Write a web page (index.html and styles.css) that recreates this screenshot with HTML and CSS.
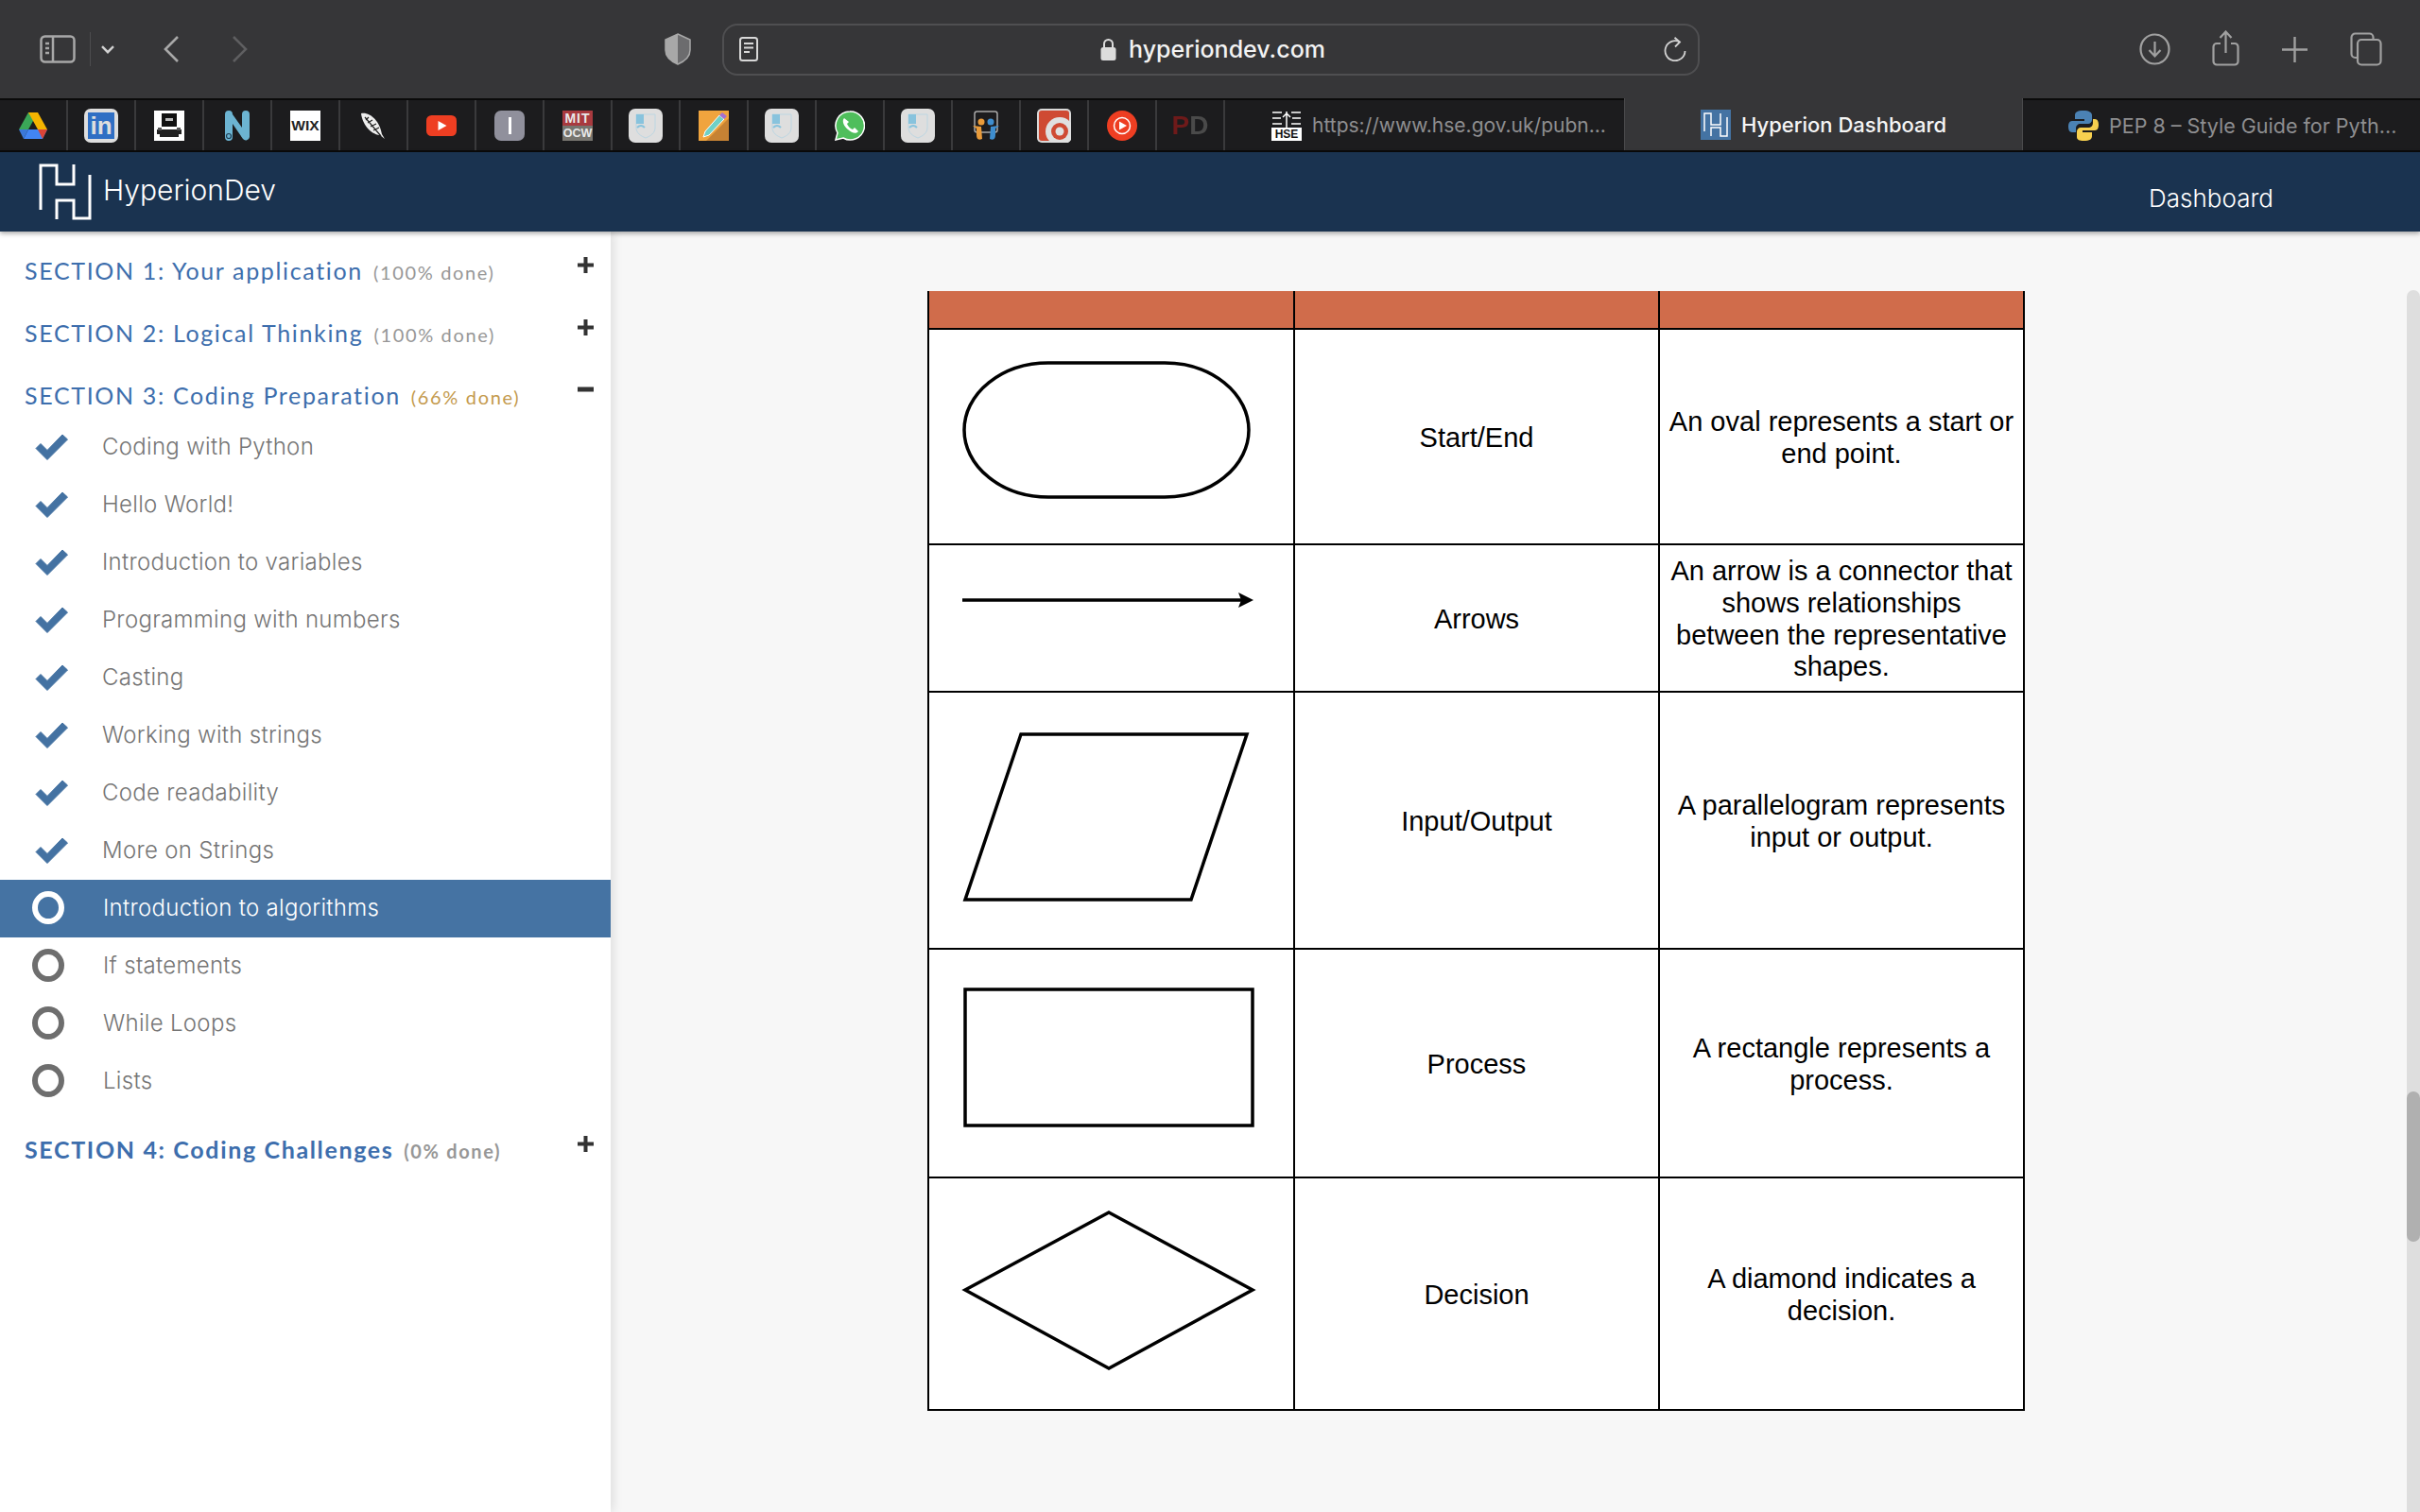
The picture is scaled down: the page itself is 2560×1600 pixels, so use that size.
FILE: index.html
```html
<!DOCTYPE html>
<html lang="en">
<head>
    <meta charset="UTF-8">
    <title>Hyperion Dashboard</title>
    <link rel="stylesheet" href="styles.css">
</head>
<body>
    <div class="toolbar">
        <svg class="tool tool-sidebar" viewBox="0 0 38 30" width="38" height="30" fill="none" stroke="#a8a8a8" stroke-width="2.5"><rect x="1.5" y="1.5" width="35" height="27" rx="4"/><path d="M14 2v26M6 9h4M6 14h4M6 19h4"/></svg>
        <span class="tool-divider"></span>
        <svg class="tool tool-menu" viewBox="0 0 14 9" width="14" height="9" fill="none" stroke="#d2d2d2" stroke-width="2.4"><path d="M1 1.2l6 6 6-6"/></svg>
        <svg class="tool tool-back" viewBox="0 0 16 28" width="16" height="28" fill="none" stroke="#a8a8a8" stroke-width="2.6"><path d="M15 1L2 14l13 13"/></svg>
        <svg class="tool tool-forward" viewBox="0 0 17 28" width="17" height="28" fill="none" stroke="#5f5f61" stroke-width="2.6"><path d="M2 1l13 13L2 27"/></svg>
        <svg class="tool tool-shield" viewBox="0 0 28 34" width="28" height="34"><path d="M14 1l13 6v11c0 8-6 12-13 15C7 30 1 26 1 18V7z" fill="#6c6c6e" stroke="#a8a8a8" stroke-width="1.5"/><path d="M14 1L1 7v11c0 8 6 12 13 15z" fill="#a8a8a8"/></svg>
        <div class="url-bar">
            <svg class="url-reader" viewBox="0 0 20 26" width="20" height="26" fill="none" stroke="#d8d8d8" stroke-width="2"><rect x="1" y="1" width="18" height="24" rx="2.5"/><path d="M5 7h10M5 11.500h10M5 16h6"/></svg>
            <div class="url-center">
                <svg viewBox="0 0 17 24" width="17" height="24"><path d="M4 11V6.500a4.500 4.500 0 0 1 9 0V11" fill="none" stroke="#dcdcdc" stroke-width="2"/><rect x="0.500" y="10" width="16" height="14" rx="2.500" fill="#dcdcdc"/></svg>
                <span class="url-text">hyperiondev.com</span>
            </div>
            <svg class="url-reload" viewBox="0 0 24 26" width="24" height="26" fill="none" stroke="#d2d2d2" stroke-width="1.800"><path d="M17 5.500A10.500 10.500 0 1 0 22.500 15"/><path d="M11.500 0.800l5.500 4.700-5 5"/></svg>
        </div>
        <svg class="tool tool-download" viewBox="0 0 33 34" width="33" height="34" fill="none" stroke="#a0a0a0" stroke-width="2.200"><ellipse cx="16.500" cy="17" rx="15" ry="15.500"/><path d="M16.500 9v15M10.500 18l6 6.500 6-6.500"/></svg>
        <svg class="tool tool-share" viewBox="0 0 29 38" width="29" height="38" fill="none" stroke="#a0a0a0" stroke-width="2.200"><path d="M9 14H5a3.500 3.500 0 0 0-3.500 3.500V33A3.500 3.500 0 0 0 5 36.500h19a3.500 3.500 0 0 0 3.500-3.500V17.500A3.500 3.500 0 0 0 24 14h-4M14.500 24V2M8.500 8l6-6.500 6 6.500"/></svg>
        <svg class="tool tool-plus" viewBox="0 0 27 27" width="27" height="27" fill="none" stroke="#a0a0a0" stroke-width="2.400"><path d="M13.500 0v27M0 13.500h27"/></svg>
        <svg class="tool tool-tabs" viewBox="0 0 34 36" width="34" height="36" fill="none" stroke="#a0a0a0" stroke-width="2.200"><path d="M7 27H5.500A4 4 0 0 1 1.500 23V5.500a4 4 0 0 1 4-4h15a4 4 0 0 1 4 4V8"/><rect x="8" y="8" width="24.500" height="26.500" rx="4"/></svg>
    </div>

    <div class="tabbar">
        <div class="pins">
            <div class="pin"><svg viewBox="0 0 30 28" width="30" height="28"><path d="M10 0h10l-5 9-5 9H0z" fill="#3aa757" transform="translate(0 0)"/><path d="M10 0h10l10 18H20z" fill="#f4b400"/><path d="M5 28h20l5-10H10z" fill="#4285f4"/><path d="M0 18l5 10 5-10z" fill="#3b78d8"/><path d="M20 18h10l-5 10z" fill="#db4437"/></svg></div>
            <div class="pin"><span class="pin-tile pin-tile-light"><span class="linkedin">in</span></span></div>
            <div class="pin"><svg viewBox="0 0 32 32" width="32" height="32"><rect width="32" height="32" fill="#fff"/><path d="M8 3h16v14H8z" fill="#111"/><path d="M12 8h8v3h-8z" fill="#bbb"/><path d="M3 20h26v5H3zM6 25h20v3H6z" fill="#222"/><path d="M4 18h4v3H4zM24 18h4v3h-4z" fill="#555"/></svg></div>
            <div class="pin"><svg viewBox="0 0 26 32" width="26" height="32"><path d="M0 4a4 4 0 0 1 8 0l10 14V4a4 4 0 0 1 8 0v24a4 4 0 0 1-7 2L8 14v14a4 4 0 0 1-8 0z" fill="#6cb4d2"/><circle cx="4" cy="27" r="2.500" fill="none" stroke="#1d3f55" stroke-width="1.200"/></svg></div>
            <div class="pin"><span class="pin-tile pin-wix">WIX</span></div>
            <div class="pin"><svg viewBox="0 0 28 30" width="28" height="30"><path d="M1 2c9-2 20 8 22 22l3 5-5-4C10 24 2 12 1 2z" fill="#eee"/><path d="M5 6l17 20M9 6l-3 3M13 9l-5 3M17 13l-6 3M20 17l-6 3" stroke="#222" stroke-width="1.200" fill="none"/></svg></div>
            <div class="pin"><svg viewBox="0 0 32 22" width="32" height="22"><rect width="32" height="22" rx="5.500" fill="#ee3e22"/><path d="M12.500 6l9 5-9 5z" fill="#fff"/></svg></div>
            <div class="pin"><span class="pin-tile pin-grey"><span class="pin-bar"></span></span></div>
            <div class="pin"><span class="pin-tile pin-mit"><span class="mit-top">MIT</span><span class="mit-bottom">OCW</span></span></div>
            <div class="pin"><span class="pin-tile pin-tile-light"><svg viewBox="0 0 24 28" width="24" height="28" fill="none"><path d="M2 2h20v14c0 6-5 9-10 11C7 25 2 22 2 16z" stroke="#bcd6e2" stroke-width="1"/><path d="M2 2h8v10H2z" fill="#88c3dd"/><path d="M3 16q4-4 8 0" stroke="#88c3dd" stroke-width="2"/></svg></span></div>
            <div class="pin"><svg viewBox="0 0 32 32" width="32" height="32"><rect width="32" height="32" fill="#f0a43e"/><path d="M8 32L32 8v24z" fill="#c68234"/><path d="M7 22L22 5l5 4-16 17-6 2z" fill="#6fd0c6" stroke="#fff" stroke-width="1"/><path d="M22 5l3-3 5 4-3 3z" fill="#a56fd0"/></svg></div>
            <div class="pin"><span class="pin-tile pin-tile-light"><svg viewBox="0 0 24 28" width="24" height="28" fill="none"><path d="M2 2h20v14c0 6-5 9-10 11C7 25 2 22 2 16z" stroke="#bcd6e2" stroke-width="1"/><path d="M2 2h8v10H2z" fill="#88c3dd"/><path d="M3 16q4-4 8 0" stroke="#88c3dd" stroke-width="2"/></svg></span></div>
            <div class="pin"><svg viewBox="0 0 32 32" width="32" height="32"><path d="M16 1a15 15 0 0 0-13 22.500L1 31l8-2A15 15 0 1 0 16 1z" fill="#4fbe5c" stroke="#fff" stroke-width="1.500"/><path d="M10 8c-3 3 0 9 4 12 4 4 9 5 11 2l-4-4-2 2c-3-1-5-4-6-6l2-2z" fill="#fff"/></svg></div>
            <div class="pin"><span class="pin-tile pin-tile-light"><svg viewBox="0 0 24 28" width="24" height="28" fill="none"><path d="M2 2h20v14c0 6-5 9-10 11C7 25 2 22 2 16z" stroke="#bcd6e2" stroke-width="1"/><path d="M2 2h8v10H2z" fill="#88c3dd"/><path d="M3 16q4-4 8 0" stroke="#88c3dd" stroke-width="2"/></svg></span></div>
            <div class="pin"><svg viewBox="0 0 30 32" width="30" height="32"><rect x="3" y="1" width="24" height="22" rx="2.500" fill="#1c1c1e" stroke="#a8a8a8" stroke-width="1.500"/><circle cx="10" cy="12" r="3.500" fill="#e99b3a"/><circle cx="20" cy="12" r="3.500" fill="#3e8ed0"/><path d="M1 16l9 1 1 13c-5 2-6-1-6-5V19z" fill="#e99b3a"/><path d="M29 16l-9 1-1 13c5 2 6-1 6-5V19z" fill="#3e8ed0"/></svg></div>
            <div class="pin"><svg viewBox="0 0 36 36" width="36" height="36"><rect width="36" height="36" rx="5" fill="#d9d9d9"/><rect x="2" y="2" width="32" height="32" rx="3" fill="#cf4a33"/><circle cx="24" cy="24" r="15" fill="#e0e0e0"/><circle cx="24" cy="24" r="9" fill="#cf4a33"/><circle cx="24" cy="24" r="4.500" fill="#e0e0e0"/></svg></div>
            <div class="pin"><svg viewBox="0 0 32 32" width="32" height="32"><circle cx="16" cy="16" r="16" fill="#ee3e22"/><circle cx="16" cy="16" r="8.500" fill="none" stroke="#fff" stroke-width="1.500"/><path d="M13 11.500l8 4.500-8 4.500z" fill="#fff"/></svg></div>
            <div class="pin"><span class="pin-pd"><span class="pd-red">P</span><span class="pd-grey">D</span></span></div>
        </div>
        <div class="tab tab-hse">
            <span class="hse-icon"><svg viewBox="0 0 32 18" width="32" height="18" fill="none" stroke="#fff" stroke-width="1.500"><path d="M1 2h10M1 8h9M1 14h10M21 2h10M22 8h9M21 14h10M16 1v17M12 7l4-4 4 4"/></svg><span class="hse-word">HSE</span></span>
            <span class="tab-label">https://www.hse.gov.uk/pubn...</span>
        </div>
        <div class="tab tab-active">
            <svg viewBox="0 0 32 32" width="32" height="32"><rect width="32" height="32" fill="#4473a3"/><path d="M4 23V4h7v12h10V4M11 28V19h10v9h7V8" fill="none" stroke="#fff" stroke-width="1.500"/></svg>
            <span class="tab-label">Hyperion Dashboard</span>
        </div>
        <div class="tab tab-pep">
            <svg viewBox="0 0 32 34" width="32" height="34"><path d="M16 1c-7 0-9 2-9 5v4h10v2H4c-3 0-4 3-4 6s1 6 4 6h4v-4c0-3 2-5 5-5h8c2 0 4-2 4-4V6c0-3-3-5-9-5z" fill="#4b82b4"/><path d="M16 33c7 0 9-2 9-5v-4H15v-2h13c3 0 4-3 4-6s-1-6-4-6h-2v4c0 3-2 5-5 5h-8c-2 0-4 2-4 4v6c0 3 3 4 7 4z" fill="#f7d04f"/></svg>
            <span class="tab-label">PEP 8 – Style Guide for Pyth...</span>
        </div>
    </div>

    <header class="site-header">
        <div class="brand">
            <svg viewBox="0 0 58 62" width="58" height="62" fill="none" stroke="#fff" stroke-width="3"><path d="M3 50V3h17v20h18V2M20 60V40h18v19h17V13"/></svg>
            <span class="brand-name">HyperionDev</span>
        </div>
        <a class="nav-link">Dashboard</a>
    </header>

    <div class="page">
        <aside class="sidebar">
            <div class="section-head">
                <div class="section-title">SECTION 1: Your application <small class="done">(100% done)</small></div>
                <svg class="toggle" viewBox="0 0 17 17" width="17" height="17"><path d="M6.500 0h4v6.500H17v4h-6.500V17h-4v-6.500H0v-4h6.500z" fill="#333"/></svg>
            </div>
            <div class="section-head">
                <div class="section-title">SECTION 2: Logical Thinking <small class="done">(100% done)</small></div>
                <svg class="toggle" viewBox="0 0 17 17" width="17" height="17"><path d="M6.500 0h4v6.500H17v4h-6.500V17h-4v-6.500H0v-4h6.500z" fill="#333"/></svg>
            </div>
            <div class="section-head">
                <div class="section-title">SECTION 3: Coding Preparation <small class="done done-partial">(66% done)</small></div>
                <svg class="toggle" viewBox="0 0 17 17" width="17" height="17"><path d="M0 5.500h17v5H0z" fill="#333"/></svg>
            </div>
            <ul class="lessons">
                <li class="lesson"><svg class="check" viewBox="0 0 35 28" width="35" height="28"><path d="M13 27.500L1 15.500l5-5 7 7L29 1l5.500 5z" fill="#4472a2" stroke="#4472a2" stroke-linejoin="round"/></svg>Coding with Python</li>
                <li class="lesson"><svg class="check" viewBox="0 0 35 28" width="35" height="28"><path d="M13 27.500L1 15.500l5-5 7 7L29 1l5.500 5z" fill="#4472a2" stroke="#4472a2" stroke-linejoin="round"/></svg>Hello World!</li>
                <li class="lesson"><svg class="check" viewBox="0 0 35 28" width="35" height="28"><path d="M13 27.500L1 15.500l5-5 7 7L29 1l5.500 5z" fill="#4472a2" stroke="#4472a2" stroke-linejoin="round"/></svg>Introduction to variables</li>
                <li class="lesson"><svg class="check" viewBox="0 0 35 28" width="35" height="28"><path d="M13 27.500L1 15.500l5-5 7 7L29 1l5.500 5z" fill="#4472a2" stroke="#4472a2" stroke-linejoin="round"/></svg>Programming with numbers</li>
                <li class="lesson"><svg class="check" viewBox="0 0 35 28" width="35" height="28"><path d="M13 27.500L1 15.500l5-5 7 7L29 1l5.500 5z" fill="#4472a2" stroke="#4472a2" stroke-linejoin="round"/></svg>Casting</li>
                <li class="lesson"><svg class="check" viewBox="0 0 35 28" width="35" height="28"><path d="M13 27.500L1 15.500l5-5 7 7L29 1l5.500 5z" fill="#4472a2" stroke="#4472a2" stroke-linejoin="round"/></svg>Working with strings</li>
                <li class="lesson"><svg class="check" viewBox="0 0 35 28" width="35" height="28"><path d="M13 27.500L1 15.500l5-5 7 7L29 1l5.500 5z" fill="#4472a2" stroke="#4472a2" stroke-linejoin="round"/></svg>Code readability</li>
                <li class="lesson"><svg class="check" viewBox="0 0 35 28" width="35" height="28"><path d="M13 27.500L1 15.500l5-5 7 7L29 1l5.500 5z" fill="#4472a2" stroke="#4472a2" stroke-linejoin="round"/></svg>More on Strings</li>
                <li class="lesson lesson-active"><span class="ring"></span>Introduction to algorithms</li>
                <li class="lesson"><span class="ring"></span>If statements</li>
                <li class="lesson"><span class="ring"></span>While Loops</li>
                <li class="lesson"><span class="ring"></span>Lists</li>
            </ul>
            <div class="section-head section-head-last">
                <div class="section-title section-title-bold">SECTION 4: Coding Challenges <small class="done">(0% done)</small></div>
                <svg class="toggle" viewBox="0 0 17 17" width="17" height="17"><path d="M6.500 0h4v6.500H17v4h-6.500V17h-4v-6.500H0v-4h6.500z" fill="#333"/></svg>
            </div>
        </aside>

        <main class="content">
            <table class="flow-table">
                <colgroup><col class="col-a"><col class="col-b"><col class="col-c"></colgroup>
                <tr class="row-head"><th></th><th></th><th></th></tr>
                <tr class="row-oval">
                    <td class="shape"><svg viewBox="0 0 386 226" width="386" height="226" fill="none" stroke="#000" stroke-width="3.500"><rect x="37" y="35" width="301" height="142" rx="89" ry="71"/></svg></td>
                    <td>Start/End</td>
                    <td>An oval represents a start or end point.</td>
                </tr>
                <tr class="row-arrow">
                    <td class="shape"><svg viewBox="0 0 386 154" width="386" height="154" fill="none" stroke="#000" stroke-width="3.500"><path d="M35 58h280"/><path d="M343 58l-16 8 3-8-3-8z" fill="#000" stroke="none"/><path d="M315 58h16"/></svg></td>
                    <td>Arrows</td>
                    <td>An arrow is a connector that shows relationships between the representative shapes.</td>
                </tr>
                <tr class="row-input">
                    <td class="shape"><svg viewBox="0 0 386 270" width="386" height="270" fill="none" stroke="#000" stroke-width="3.500"><path d="M97 44h239l-59 175H38z"/></svg></td>
                    <td>Input/Output</td>
                    <td>A parallelogram represents input or output.</td>
                </tr>
                <tr class="row-process">
                    <td class="shape"><svg viewBox="0 0 386 240" width="386" height="240" fill="none" stroke="#000" stroke-width="3.500"><rect x="38" y="42" width="304" height="144"/></svg></td>
                    <td>Process</td>
                    <td>A rectangle represents a process.</td>
                </tr>
                <tr class="row-decision">
                    <td class="shape"><svg viewBox="0 0 386 244" width="386" height="244" fill="none" stroke="#000" stroke-width="3.500"><path d="M190 36l152 82-152 83-152-83z"/></svg></td>
                    <td>Decision</td>
                    <td>A diamond indicates a decision.</td>
                </tr>
            </table>
            <div class="scroll-track"><div class="scroll-thumb"></div></div>
        </main>
    </div>
</body>
</html>
```
FILE: styles.css
```css
* {
    margin: 0;
    padding: 0;
    box-sizing: border-box;
}

body {
    width: 2560px;
    height: 1600px;
    overflow: hidden;
    display: flex;
    flex-direction: column;
    font-family: Inter, "Liberation Sans", sans-serif;
    background-color: #f7f7f7;
}

/* browser chrome */
.toolbar {
    height: 104px;
    flex-shrink: 0;
    display: flex;
    align-items: center;
    padding-left: 42px;
    background-color: #363638;
}

.tool {
    flex-shrink: 0;
}

.tool-divider {
    width: 1px;
    height: 36px;
    margin-left: 15px;
    background-color: #4c4c4e;
}

.tool-menu { margin-left: 11px; }
.tool-back { margin-left: 52px; }
.tool-forward { margin-left: 56px; }
.tool-shield { margin-left: 441px; }
.tool-download { margin-left: 465px; }
.tool-share { margin-left: 44px; margin-top: -2px; }
.tool-plus { margin-left: 45px; }
.tool-tabs { margin-left: 45px; }

.url-bar {
    width: 1034px;
    height: 55px;
    margin-left: 33px;
    padding: 0 12px 0 16px;
    display: grid;
    grid-template-columns: 1fr auto 1fr;
    align-items: center;
    border: 2px solid #4f4f51;
    border-radius: 16px;
}

.url-center {
    display: flex;
    align-items: center;
    gap: 13px;
}

.url-text {
    color: #f2f2f2;
    font-size: 25px;
    font-weight: 500;
}

.url-reload {
    justify-self: end;
}

.tabbar {
    height: 57px;
    flex-shrink: 0;
    display: flex;
    background-color: #1c1c1e;
    border-top: 2px solid #0a0a0a;
    border-bottom: 2px solid #0a0a0a;
}

.pins {
    display: flex;
}

.pin {
    width: 72px;
    display: flex;
    align-items: center;
    justify-content: center;
    border-right: 2px solid #3a3a3c;
}

.pin-tile {
    width: 36px;
    height: 36px;
    display: flex;
    flex-direction: column;
    align-items: center;
    justify-content: center;
    border-radius: 7px;
}

.pin-tile-light {
    background-color: #dedede;
}

.linkedin {
    width: 28px;
    height: 28px;
    background-color: #2f6fc4;
    color: #dedede;
    font-family: "Liberation Sans", sans-serif;
    font-size: 26px;
    font-weight: 700;
    line-height: 28px;
    text-align: center;
}

.pin-wix {
    width: 32px;
    height: 32px;
    border-radius: 0;
    background-color: #fff;
    color: #222;
    font-family: "Liberation Sans", sans-serif;
    font-size: 15.500px;
    font-weight: 700;
}

.pin-grey {
    width: 32px;
    height: 32px;
    background-color: #90909c;
}

.pin-bar {
    width: 3px;
    height: 18px;
    background-color: #fff;
}

.pin-mit {
    width: 32px;
    height: 32px;
    border-radius: 0;
    font-family: "Liberation Sans", sans-serif;
    font-weight: 700;
    color: #e8e8e8;
    overflow: hidden;
}

.mit-top, .mit-bottom {
    width: 100%;
    flex: 1;
    text-align: center;
    line-height: 16px;
}

.mit-top { background-color: #a83a3f; font-size: 14px; letter-spacing: 1px; }
.mit-bottom { background-color: #77756f; font-size: 12.500px; }

.pin-pd {
    font-family: "Liberation Sans", sans-serif;
    font-size: 28px;
    font-weight: 700;
    filter: blur(0.6px);
}

.pd-red { color: #6e1a1a; }
.pd-grey { color: #4a4a4a; }

.tab {
    display: flex;
    align-items: center;
    flex-shrink: 0;
    font-size: 22px;
    color: #8e8e90;
    white-space: nowrap;
}

.tab-label {
    margin-left: 11px;
}

.tab-hse {
    width: 422px;
    padding-left: 49px;
    font-size: 21px;
}

.hse-icon {
    width: 32px;
    height: 32px;
    display: flex;
    flex-direction: column;
    align-items: center;
}

.hse-word {
    width: 32px;
    height: 14px;
    background-color: #fff;
    color: #111;
    font-family: "Liberation Sans", sans-serif;
    font-size: 12px;
    font-weight: 700;
    line-height: 14px;
    text-align: center;
}

.tab-active {
    width: 422px;
    padding-left: 80px;
    margin-top: -2px;
    background-color: #363638;
    color: #f5f5f5;
    font-weight: 500;
    border-left: 1px solid #4a4a4c;
    border-right: 1px solid #4a4a4c;
}

.tab-pep {
    flex: 1;
    padding-left: 48px;
    font-size: 21.500px;
}

/* site header */
.site-header {
    height: 84px;
    flex-shrink: 0;
    display: flex;
    justify-content: space-between;
    padding: 11px 155px 0 40px;
    background-color: #1a3350;
    box-shadow: 0 2px 5px rgba(0, 0, 0, 0.35);
    position: relative;
    z-index: 2;
}

.brand {
    display: flex;
    align-items: flex-start;
    gap: 11px;
    color: #fff;
}

.brand-name {
    margin-top: 11px;
    font-size: 30px;
    font-weight: 300;
}

.nav-link {
    margin-top: 22px;
    color: #fff;
    font-size: 26px;
    font-weight: 300;
}

/* sidebar */
.page {
    flex: 1;
    display: flex;
    min-height: 0;
}

.sidebar {
    width: 646px;
    flex-shrink: 0;
    padding-top: 22px;
    background-color: #fff;
    box-shadow: 3px 0 10px rgba(0, 0, 0, 0.1);
    position: relative;
    z-index: 1;
}

.section-head {
    height: 40px;
    margin-bottom: 26px;
    padding: 0 18px 0 26px;
    display: flex;
    justify-content: space-between;
    align-items: flex-start;
}

.section-head:nth-of-type(3) {
    margin-bottom: 4px;
}

.section-head-last {
    margin-top: 22px;
}

.section-title {
    font-family: Lato, sans-serif;
    font-size: 25px;
    line-height: 38px;
    letter-spacing: 1.650px;
    color: #3d6ead;
}

.section-title-bold {
    font-weight: 700;
}

.done {
    margin-left: 3px;
    font-size: 20px;
    color: #979797;
}

.done-partial {
    color: #c49a4d;
}

.toggle {
    margin-top: 5px;
}

.lessons {
    list-style: none;
}

.lesson {
    height: 61px;
    display: flex;
    align-items: center;
    padding: 0 0 2px 34px;
    font-size: 24px;
    font-weight: 300;
    letter-spacing: 0.300px;
    color: #757575;
}

.check {
    margin: 0 36px 0 3px;
}

.ring {
    width: 34px;
    height: 35px;
    margin-right: 41px;
    border: 6px solid #6e6e6e;
    border-radius: 50%;
}

.lesson-active {
    background-color: #4573a3;
    color: #fff;
}

.lesson-active .ring {
    border-color: #fff;
}

/* flowchart table */
.content {
    flex: 1;
    padding: 63px 0 0 335px;
    position: relative;
}

.flow-table {
    width: 1159px;
    table-layout: fixed;
    border-collapse: collapse;
    background-color: #fff;
    font-family: "Liberation Sans", Arial, sans-serif;
    font-size: 29px;
    line-height: 33.750px;
    color: #000;
    text-align: center;
}

.col-a { width: 387px; }
.col-b { width: 386px; }
.col-c { width: 386px; }

.flow-table th,
.flow-table td {
    border: 2px solid #000;
    padding: 3px 8px 0;
    font-weight: 400;
}

.flow-table th {
    border-top: 0;
    background-color: #d06c4b;
}

.flow-table td.shape {
    padding: 0;
}

.shape svg {
    display: block;
}

.row-head { height: 40px; }
.row-oval { height: 228px; }
.row-arrow { height: 156px; }
.row-input { height: 272px; }
.row-process { height: 242px; }
.row-decision { height: 246px; }

.scroll-track {
    position: absolute;
    top: 62px;
    right: 0;
    bottom: 0;
    width: 14px;
    background-color: #dedede;
    border-radius: 7px 7px 0 0;
}

.scroll-thumb {
    position: absolute;
    top: 848px;
    left: 0;
    width: 14px;
    height: 159px;
    background-color: #b0b0b0;
    border-radius: 7px;
}
```
